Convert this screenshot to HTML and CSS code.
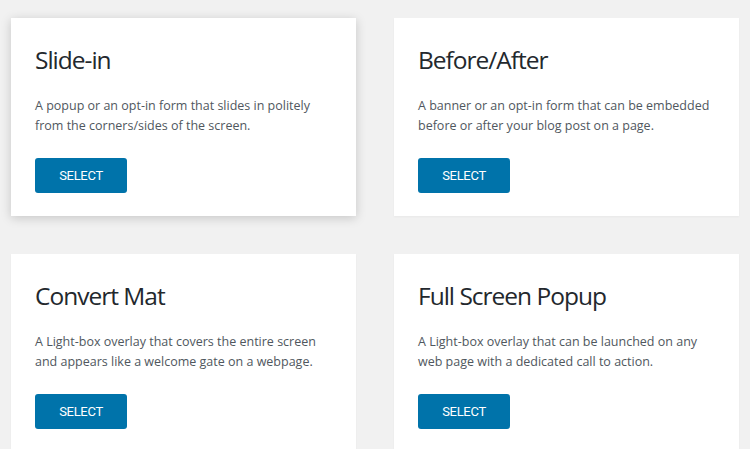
FILE: index.html
```html
<!DOCTYPE html>
<html lang="en">
<head>
  <meta charset="UTF-8" />
  <meta name="viewport" content="width=device-width, initial-scale=1.0"/>
  <title>Choose a Module</title>
  <link rel="stylesheet" href="styles.css">
</head>
<body>

<div class="grid">
  <div class="card card-active">
    <h3>Slide-in</h3>
    <p>A popup or an opt-in form that slides in politely from the corners/sides of the screen.</p>
    <button class="btn-select">Select</button>
  </div>

  <div class="card">
    <h3>Before/After</h3>
    <p>A banner or an opt-in form that can be embedded before or after your blog post on a page.</p>
    <button class="btn-select">Select</button>
  </div>

  <div class="card">
    <h3>Convert Mat</h3>
    <p>A Light-box overlay that covers the entire screen and appears like a welcome gate on a webpage.</p>
    <button class="btn-select">Select</button>
  </div>

  <div class="card">
    <h3>Full Screen Popup</h3>
    <p>A Light-box overlay that can be launched on any web page with a dedicated call to action.</p>
    <button class="btn-select">Select</button>
  </div>
</div>

</body>
</html>
```

FILE: styles.css
```css
body {
  font-family: "Open Sans", Arial, sans-serif;
  background: #f1f1f1;
  margin: 0;
  padding: 18px 0 0 11px;
}

.grid {
  display: grid;
  grid-template-columns: 345px 345px;
  column-gap: 38px;
  row-gap: 38px;
}

.card {
  background: #fff;
  height: 198px;
  box-sizing: border-box;
  padding: 26px 20px 23px 24px;
  box-shadow: 0 1px 2px rgba(0,0,0,0.04);
}

.card-active {
  box-shadow: 0 2px 10px rgba(0,0,0,0.18);
}

.card h3 {
  margin: 0;
  font-size: 24.5px;
  line-height: 32px;
  font-weight: 400;
  letter-spacing: -1px;
  color: #23282d;
}

.card p {
  margin: 20px 0 0 0;
  font-size: 12.5px;
  line-height: 20px;
  color: #50575e;
}

.btn-select {
  margin-top: 22px;
  width: 92px;
  height: 35px;
  background: #0073aa;
  color: #fff;
  border: none;
  border-radius: 3px;
  font-family: Roboto, "Open Sans", sans-serif;
  font-size: 13px;
  letter-spacing: -0.3px;
  text-transform: uppercase;
  cursor: pointer;
}
```
